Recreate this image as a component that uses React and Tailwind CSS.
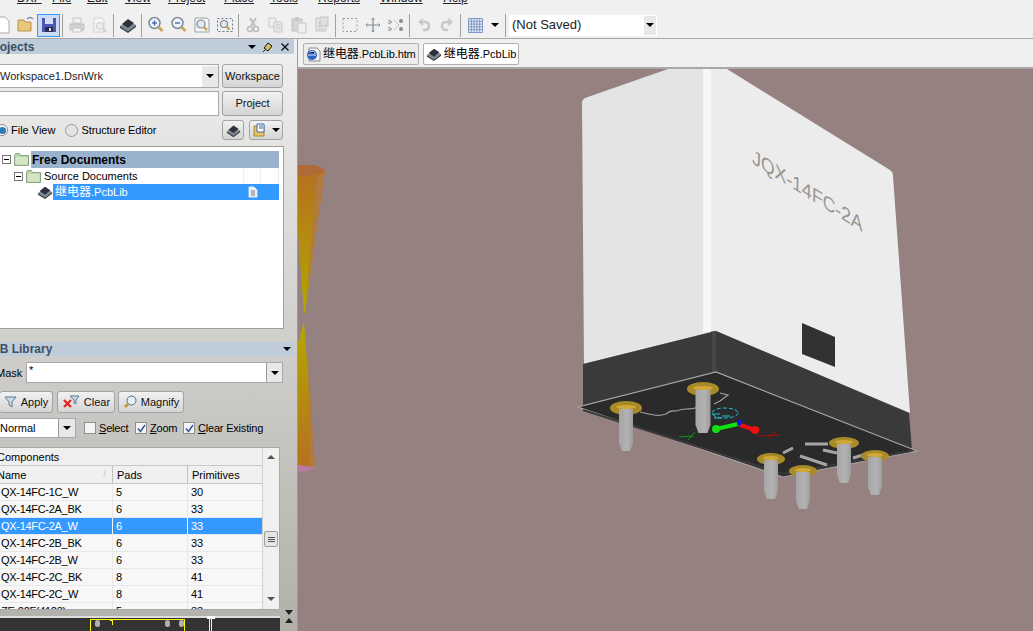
import React from "react";

const rows = [
  ["QX-14FC-1C_W", "5", "30"],
  ["QX-14FC-2A_BK", "6", "33"],
  ["QX-14FC-2A_W", "6", "33", true],
  ["QX-14FC-2B_BK", "6", "33"],
  ["QX-14FC-2B_W", "6", "33"],
  ["QX-14FC-2C_BK", "8", "41"],
  ["QX-14FC-2C_W", "8", "41"],
  ["ZE-22F(4123)", "5", "33"],
];

const pins = [
  [626, 408, 16, 7, 7, 451],
  [703, 389, 16, 7, 7.5, 433],
  [771, 459, 14, 6, 7, 499],
  [803, 471, 14, 6, 7, 509],
  [844, 443, 15, 6, 7, 483],
  [875, 456, 14, 6, 7, 495],
];

function Icon({ children }) {
  return (
    <svg width="18" height="18" viewBox="0 0 18 18" fill="none">
      {children}
    </svg>
  );
}

function Magnifier({ sign }) {
  return (
    <Icon>
      <circle cx="7.5" cy="7" r="5.5" fill="#eef3f8" stroke="#7d8a96" strokeWidth="1.5" />
      <path d="M11.5 11l4 4" stroke="#c8a85c" strokeWidth="3" />
      {sign && <path d="M5 7h5" stroke="#3d6fa8" strokeWidth="1.4" />}
      {sign === "+" && <path d="M7.5 4.5v5" stroke="#3d6fa8" strokeWidth="1.4" />}
    </Icon>
  );
}

function ChipIcon({ size = 18 }) {
  return (
    <svg width={size} height={size} viewBox="0 0 18 18">
      <path d="M1 10l8-5 8 4-8 6z" fill="#7d8894" />
      <path d="M3 8l6-5 6 4-6 5z" fill="#2b323b" />
      <path d="M1 10l8 5v2l-8-5zM17 9l-8 6v2l8-6z" fill="#444" />
    </svg>
  );
}

function DocLines() {
  return (
    <>
      <path d="M3 2h7l3 3v10H3z" fill="#e6e6e6" stroke="#c4c4c4" />
      <path d="M5 7h6M5 10h6M5 13h6" stroke="#c4c4c4" />
    </>
  );
}

function Tool({ children, active }) {
  return (
    <div className={`w-[23px] h-[23px] shrink-0 flex items-center justify-center ${active ? "border border-[#3399ff] bg-[#c7dcf2]" : ""}`}>
      {children}
    </div>
  );
}

function Sep() {
  return (
    <div className="w-[5px] h-[23px] shrink-0 flex justify-center">
      <div className="w-px h-full bg-[#a0a0a0]" />
    </div>
  );
}

function Arrow({ className = "border-t-black" }) {
  return <div className={`w-0 h-0 border-x-[4px] border-x-transparent border-t-[4px] ${className}`} />;
}

function Btn({ className = "", children }) {
  return (
    <div className={`flex items-center justify-center gap-1 shrink-0 rounded-[3px] border border-[#a3a3a3] bg-linear-to-b from-[#f2f2f2] to-[#d4d4d4] text-[#111] ${className}`}>
      {children}
    </div>
  );
}

function ComboArrow({ className = "" }) {
  return (
    <div className={`flex items-center justify-center bg-[#e8e8e8] shrink-0 ${className}`}>
      <Arrow />
    </div>
  );
}

function Check({ on, under, rest, className = "" }) {
  return (
    <div className={`flex items-center gap-[3px] shrink-0 ${className}`}>
      <div className="w-[12px] h-[12px] border border-[#8f8f8f] bg-[#f4f4f4] flex items-center justify-center">
        {on && (
          <svg width="9" height="9" viewBox="0 0 9 9">
            <path d="M1 4.5l2.5 3L8 1" fill="none" stroke="#3a5a9a" strokeWidth="1.5" />
          </svg>
        )}
      </div>
      <span className="tracking-[-0.2px]">
        <span className="underline">{under}</span>
        {rest}
      </span>
    </div>
  );
}

function Expander() {
  return (
    <div className="w-[9px] h-[9px] border border-[#777] bg-white flex items-center justify-center shrink-0">
      <div className="w-[5px] h-px bg-black" />
    </div>
  );
}

function Folder() {
  return (
    <svg width="15" height="13" viewBox="0 0 15 13" className="shrink-0">
      <path d="M0.5 2.5l1-2h4l1 2h8v10h-14z" fill="#b9d8a8" stroke="#8aa583" />
      <path d="M1.5 4h12v7.5h-12z" fill="#d5e6c6" />
    </svg>
  );
}

function LibName() {
  return (
    <span>
      <span className="text-[12px]">继电器</span>.PcbLib
    </span>
  );
}

function Relay() {
  return (
    <svg className="absolute inset-0" width="735" height="562" viewBox="298 69 735 562">
      <defs>
        <linearGradient id="cone1" x1="0" y1="0" x2="0" y2="1">
          <stop offset="0" stopColor="#b5701f" />
          <stop offset="1" stopColor="#b3a800" />
        </linearGradient>
        <linearGradient id="cone2" x1="0" y1="1" x2="0" y2="0">
          <stop offset="0" stopColor="#b5701f" />
          <stop offset="1" stopColor="#b3a800" />
        </linearGradient>
        <linearGradient id="pin" x1="0" y1="0" x2="1" y2="0">
          <stop offset="0" stopColor="#a6a6a6" />
          <stop offset="0.6" stopColor="#b2b2b2" />
          <stop offset="1" stopColor="#9c9c9c" />
        </linearGradient>
      </defs>

      {/* cone off to the left of the model */}
      <path d="M298 170H325L305 313H304L298 233Z" fill="url(#cone1)" />
      <path d="M317 176L325 172L306 300Z" fill="#b07a40" />
      <path d="M298 165h16q10 2 11 6q-7 5-27 6z" fill="#b06a38" />
      <path d="M304 322L298 343V470L315 466Z" fill="url(#cone2)" />
      <path d="M308 360L315 466L310 467Z" fill="#b07a40" />
      <path d="M298 465l10 1q6 1 7 2q-3 3-17 4z" fill="#b97aa0" />

      {/* body */}
      <path d="M582 102Q582 100 585 98L668 69H711V332L584 364Z" fill="#e4e4e4" />
      <path d="M711 69H727L890 170Q893 172 893 176L910 413L716 331H711Z" fill="#ececec" />
      <rect x="703" y="69" width="8" height="263" fill="#f7f7f7" />
      <path d="M802 323L835 337V367L802 354Z" fill="#323232" />
      <text
        transform="matrix(0.88,0.55,-0.03,1,752,163)"
        fontFamily="'Liberation Sans',sans-serif"
        fontSize="20"
        fill="#9a9590"
      >
        JQX-14FC-2A
      </text>

      {/* dark lower shell */}
      <path d="M583 364L716 331L909 413L912 450L716 372L583 405Z" fill="#3a3a3a" />
      <path d="M712 332h4v40h-4z" fill="#474747" />

      {/* board */}
      <path d="M578 407L716 372L917 451L783 477Z" fill="#2a2a2a" stroke="#a8a4a2" strokeWidth="1.2" />
      <path d="M583 410L783 474L911 451" fill="none" stroke="#3a3a3a" strokeWidth="2" />

      {/* silkscreen */}
      <path d="M640 412q8 2 14 3t12-1q4-4 10-3q6-2 10-2q8 0 12-2M720 393l8 2-8 6-6 3" fill="none" stroke="#9f9f9f" strokeWidth="1.2" />
      <path d="M783 453l10-5M805 444h23M800 456l27 9M823 450l14 3M853 458l10-3" fill="none" stroke="#a5a5a5" strokeWidth="3" />
      <ellipse cx="725" cy="413" rx="13" ry="5" fill="none" stroke="#23c5d8" strokeDasharray="4 2" />
      <path d="M712 414h8M714 418h8M722 416h8" stroke="#23c5d8" />
      <path d="M679 437l14-1M688 440l7-8" stroke="#0e9c0e" />
      <path d="M758 436l22-1M767 439l8-7" stroke="#a01010" />

      {/* origin axes */}
      <path d="M738 424L716 429" stroke="#12e012" strokeWidth="4" />
      <ellipse cx="716" cy="429" rx="4" ry="4" fill="#12e012" />
      <path d="M740 425L755 430" stroke="#ee1010" strokeWidth="4" />
      <ellipse cx="755" cy="430" rx="4.5" ry="4" fill="#ee1010" />
      <rect x="737" y="420" width="4" height="5" fill="#1010ee" />

      {/* pins */}
      {pins.map(([cx, cy, rx, ry, w, end]) => (
        <g key={cx}>
          <ellipse cx={cx} cy={cy} rx={rx} ry={ry} fill="#a98a28" />
          <ellipse cx={cx} cy={cy - 1} rx={rx - 6} ry={2} fill="#cfa838" />
          <path d={`M${cx - w} ${cy + 1}H${cx + w}V${end - 8}L${cx + w - 3} ${end}H${cx - w + 3}L${cx - w} ${end - 8}Z`} fill="url(#pin)" />
        </g>
      ))}
    </svg>
  );
}

export default function App() {
  return (
    <div className="w-[1033px] h-[631px] overflow-hidden flex flex-col bg-[#f0f0f0] text-[11px] text-black font-['Liberation_Sans','Noto_Sans_CJK_SC',sans-serif]">
      {/* menu, cut off by the top of the picture */}
      <div className="h-[12px] shrink-0 overflow-hidden">
        <div className="flex -mt-[10px] pl-[17px] text-[12px] leading-[16px] text-[#222]">
          <span className="w-[35px] shrink-0"><span className="underline">DXP</span></span>
          <span className="w-[35px] shrink-0"><span className="underline">File</span></span>
          <span className="w-[38px] shrink-0"><span className="underline">Edit</span></span>
          <span className="w-[43px] shrink-0"><span className="underline">View</span></span>
          <span className="w-[56px] shrink-0"><span className="underline">Project</span></span>
          <span className="w-[46px] shrink-0"><span className="underline">Place</span></span>
          <span className="w-[48px] shrink-0"><span className="underline">Tools</span></span>
          <span className="w-[62px] shrink-0"><span className="underline">Reports</span></span>
          <span className="w-[63px] shrink-0"><span className="underline">Window</span></span>
          <span className="shrink-0"><span className="underline">Help</span></span>
        </div>
      </div>

      {/* toolbar */}
      <div className="h-[27px] shrink-0 flex items-center -ml-[9px] border-b border-[#a8a8a8] w-[1042px]">
        <Tool><Icon><path d="M3 1h8l4 4v12H3z" fill="#fff" stroke="#aaa" /></Icon></Tool>
        <Tool>
          <Icon>
            <path d="M1 4h6l1 2h6v9H1z" fill="#e8c878" stroke="#b0924e" />
            <path d="M10 3q3-3 6 0" stroke="#7a8fb0" strokeWidth="1.5" />
          </Icon>
        </Tool>
        <Tool active>
          <Icon>
            <rect x="2" y="2" width="14" height="14" fill="#4d55b5" />
            <rect x="5" y="2" width="8" height="6" fill="#d8dcf5" />
            <rect x="5" y="11" width="8" height="5" fill="#2c2c4c" />
            <rect x="9" y="12" width="2" height="3" fill="#ddd" />
          </Icon>
        </Tool>
        <Sep />
        <Tool>
          <Icon>
            <path d="M5 2h8v5H5z" fill="#f0f0f0" stroke="#c4c4c4" />
            <path d="M2 8h14v6H2z" fill="#d2d2d2" stroke="#c0c0c0" />
            <path d="M5 12h8v4H5z" fill="#f4f4f4" stroke="#c4c4c4" />
          </Icon>
        </Tool>
        <Tool>
          <Icon>
            <path d="M3 2h8l2 2v12H3z" fill="#f6f6f6" stroke="#d0d0d0" />
            <circle cx="9" cy="10" r="3.5" fill="#eee" stroke="#c8c8c8" />
            <path d="M12 13l3 3" stroke="#d8d0b8" strokeWidth="2" />
          </Icon>
        </Tool>
        <Sep />
        <Tool><ChipIcon /></Tool>
        <Sep />
        <Tool><Magnifier sign="+" /></Tool>
        <Tool><Magnifier sign="-" /></Tool>
        <Tool>
          <Icon>
            <path d="M2 2h12l2 2v12H2z" fill="#f4f4f4" stroke="#9aa3ad" />
            <circle cx="8" cy="8" r="4" fill="#dfe9f2" stroke="#7d8a96" strokeWidth="1.2" />
            <path d="M11 11l3 3" stroke="#c8a85c" strokeWidth="2.5" />
          </Icon>
        </Tool>
        <Tool>
          <Icon>
            <rect x="1.5" y="2.5" width="15" height="13" stroke="#6a7480" strokeDasharray="2 2" />
            <circle cx="8" cy="8" r="3.5" fill="#dfe9f2" stroke="#7d8a96" strokeWidth="1.2" />
            <path d="M10.5 10.5l3 3" stroke="#c8a85c" strokeWidth="2.5" />
          </Icon>
        </Tool>
        <Sep />
        <Tool>
          <Icon>
            <path d="M6 2l5 8M12 2l-5 8" stroke="#bcbcbc" strokeWidth="2" />
            <circle cx="6" cy="13" r="2.5" stroke="#bcbcbc" strokeWidth="1.5" />
            <circle cx="12" cy="13" r="2.5" stroke="#bcbcbc" strokeWidth="1.5" />
          </Icon>
        </Tool>
        <Tool>
          <Icon>
            <path d="M2 2h7v9H2z" fill="#efefef" stroke="#c8c8c8" />
            <path d="M7 6h8v10H7z" fill="#e6e6e6" stroke="#c8c8c8" />
            <path d="M9 9h4M9 12h4" stroke="#c8c8c8" />
          </Icon>
        </Tool>
        <Tool>
          <Icon>
            <path d="M2 3h10v12H2z" fill="#d6d6d6" stroke="#c0c0c0" />
            <path d="M5 1h4v4H5z" fill="#c8c8c8" />
            <path d="M8 7h8v10H8z" fill="#efefef" stroke="#c8c8c8" />
          </Icon>
        </Tool>
        <Tool><Icon><DocLines /><path d="M7 1h8v9H7z" fill="#dedede" stroke="#c4c4c4" /></Icon></Tool>
        <Sep />
        <Tool><Icon><rect x="2" y="2.5" width="14" height="13" stroke="#9a9a9a" strokeDasharray="2 2" /></Icon></Tool>
        <Tool>
          <Icon>
            <path d="M9 2v14M2 9h14" stroke="#7e8c9c" strokeWidth="1.2" />
            <path d="M7.5 3.5L9 2l1.5 1.5M7.5 14.5L9 16l1.5-1.5M3.5 7.5L2 9l1.5 1.5M14.5 7.5L16 9l-1.5 1.5" stroke="#7e8c9c" />
          </Icon>
        </Tool>
        <Tool>
          <Icon>
            <path d="M2 4l3 2-3 2zM2 11l3 2-3 2z" stroke="#9a9a9a" />
            <path d="M7 4l5 5-5 5" stroke="#a8a8a8" strokeDasharray="2 1" />
            <circle cx="14" cy="5" r="2" fill="#8c8c8c" />
            <circle cx="14" cy="13" r="2" fill="#8c8c8c" />
          </Icon>
        </Tool>
        <Sep />
        <Tool><Icon><path d="M5 6h5q4 0 4 4t-4 4H8" stroke="#c8c8c8" strokeWidth="2.5" /><path d="M8 3L4.5 6 8 9" stroke="#c8c8c8" strokeWidth="2" /></Icon></Tool>
        <Tool><Icon><path d="M13 6H8q-4 0-4 4t4 4h2" stroke="#c8c8c8" strokeWidth="2.5" /><path d="M10 3l3.5 3L10 9" stroke="#c8c8c8" strokeWidth="2" /></Icon></Tool>
        <Sep />
        <div className="w-[23px] h-[23px] ml-px shrink-0 flex items-center justify-center">
          <svg width="15" height="15" viewBox="0 0 15 15" fill="none">
            <path d="M.5.5h14v14H.5zM.5 3.3h14M.5 6.1h14M.5 8.9h14M.5 11.7h14M3.3.5v14M6.1.5v14M8.9.5v14M11.7.5v14" stroke="#7e97cc" />
          </svg>
        </div>
        <div className="w-[16px] flex justify-center"><Arrow /></div>
        <div className="w-[5px] h-[23px] flex justify-center"><div className="w-px h-full bg-[#a0a0a0]" /></div>
        <div className="w-[148px] h-[21px] ml-[1px] bg-white flex items-center justify-between text-[13px] text-[#222] pl-[3px]">
          <span>(Not Saved)</span>
          <ComboArrow className="w-[12px] h-[19px] mr-px" />
        </div>
      </div>

      <div className="flex flex-1 min-h-0">
        {/* left panels */}
        <div className="w-[298px] shrink-0 flex flex-col overflow-hidden bg-linear-to-b from-[#f0f0f0] to-[#b2b0aa] border-r border-[#9a9a9a]">
          <div className="h-[15px] w-[294px] shrink-0 bg-[#bfcddb] flex items-center">
            <span className="-ml-[13px] font-bold text-[12px] text-[#3c4f66]">Projects</span>
            <div className="ml-auto flex items-center gap-[6px] pr-[4px]">
              <Arrow className="border-t-black" />
              <svg width="12" height="12" viewBox="0 0 12 12">
                <path d="M2 7l4-5 4 3-4 5z" fill="#d8c060" stroke="#111" />
                <path d="M3 9l-2 2" stroke="#111" />
              </svg>
              <svg width="10" height="10" viewBox="0 0 10 10">
                <path d="M1.5 1.5l7 7M8.5 1.5l-7 7" stroke="#111" strokeWidth="1.4" />
              </svg>
            </div>
          </div>

          <div className="mt-[10px] flex w-[283px] gap-[3px] h-[24px] shrink-0">
            <div className="w-[219px] bg-white border border-[#a8a8a8] border-l-0 flex items-center justify-between text-[#222]">
              <span className="truncate">Workspace1.DsnWrk</span>
              <ComboArrow className="w-[16px] h-[21px]" />
            </div>
            <Btn className="w-[61px]">Workspace</Btn>
          </div>

          <div className="mt-[3px] flex w-[283px] gap-[3px] h-[25px] shrink-0">
            <div className="w-[219px] bg-white border border-[#a8a8a8] border-l-0" />
            <Btn className="w-[61px]">Project</Btn>
          </div>

          <div className="mt-[4px] flex items-center w-[283px] h-[20px] shrink-0">
            <div className="w-[12px] h-[12px] -ml-[4px] rounded-full border border-[#888] bg-white flex items-center justify-center">
              <div className="w-[7px] h-[7px] rounded-full bg-[#2a7ab8]" />
            </div>
            <span className="ml-[3px]">File View</span>
            <div className="w-[13px] h-[13px] ml-[10px] rounded-full border border-[#999] bg-[#e4e4e4]" />
            <span className="ml-[3px] tracking-[-0.1px]">Structure Editor</span>
            <Btn className="w-[22px] h-[20px] ml-auto"><ChipIcon size={15} /></Btn>
            <Btn className="w-[34px] h-[20px] ml-[5px]">
              <svg width="15" height="14" viewBox="0 0 15 14">
                <path d="M1 3h10v10H1z" fill="#e9c35e" stroke="#a58a3c" />
                <path d="M4 1h7v8H4z" fill="#fff" stroke="#3a67b0" />
                <path d="M6 3h4M6 5h4" stroke="#3a67b0" />
              </svg>
              <Arrow />
            </Btn>
          </div>

          <div className="mt-[6px] w-[284px] h-[183px] shrink-0 bg-white border border-[#a0a0a0] border-l-0 pt-[4px] pr-[4px]">
            <div className="flex items-center h-[17px] pl-[2px]">
              <Expander />
              <div className="ml-[3px]"><Folder /></div>
              <div className="ml-[2px] flex-1 h-full bg-[#99b3cf] flex items-center pl-[1px] font-bold text-[12px]">Free Documents</div>
            </div>
            <div className="flex items-center h-[16px] pl-[14px]">
              <Expander />
              <div className="ml-[3px]"><Folder /></div>
              <span className="ml-[3px]">Source Documents</span>
              <div className="ml-auto flex h-full">
                <div className="w-[18px] border-x border-[#eeeeee]" />
                <div className="w-[18px] border-r border-[#eeeeee]" />
              </div>
            </div>
            <div className="flex items-center h-[16px] pl-[37px]">
              <ChipIcon size={16} />
              <div className="flex-1 h-full bg-[#3399ff] text-white flex items-center pl-[2px]">
                <LibName />
                <svg width="10" height="12" viewBox="0 0 10 12" className="ml-auto mr-[21px]">
                  <path d="M1 1h5l3 3v7H1z" fill="#f0f0f0" stroke="#dfe9f5" />
                  <path d="M3 5h4M3 7h4M3 9h4" stroke="#777" />
                </svg>
              </div>
            </div>
          </div>

          <div className="mt-[13px] h-[14px] w-[294px] shrink-0 bg-[#bfcddb] flex items-center justify-between pr-[3px]">
            <span className="-ml-[17px] font-bold text-[12px] text-[#3c4f66]">PCB Library</span>
            <Arrow className="border-t-black" />
          </div>

          <div className="mt-[6px] flex items-center w-[283px] h-[21px] shrink-0">
            <span className="-ml-[4px] w-[30px] shrink-0 pt-[2px]">Mask</span>
            <div className="flex-1 h-full bg-white border border-[#a8a8a8] flex items-center justify-between pl-[2px]">
              <span className="self-start leading-[14px]">*</span>
              <ComboArrow className="w-[16px] h-[19px] border-l border-[#999]" />
            </div>
          </div>

          <div className="mt-[8px] flex h-[22px] shrink-0">
            <Btn className="w-[53px] border-l-0">
              <svg width="13" height="12" viewBox="0 0 13 12">
                <path d="M1 1h11L8 6v5l-3-2V6z" fill="#c7dbe9" stroke="#5e7b92" />
              </svg>
              Apply
            </Btn>
            <Btn className="w-[58px] ml-[4px]">
              <svg width="18" height="14" viewBox="0 0 18 14">
                <path d="M8 1h9l-3 4v4l-2-1V5z" fill="#c7dbe9" stroke="#5e7b92" />
                <path d="M2 5l7 7M9 5l-7 7" stroke="#e0261c" strokeWidth="2.2" />
              </svg>
              Clear
            </Btn>
            <Btn className="w-[66px] ml-[3px]">
              <svg width="14" height="14" viewBox="0 0 14 14">
                <circle cx="8.5" cy="5.5" r="4.5" fill="#e6eff8" stroke="#5a6a78" />
                <path d="M5 9l-3 3" stroke="#c29b3c" strokeWidth="3" />
              </svg>
              Magnify
            </Btn>
          </div>

          <div className="mt-[5px] flex items-center h-[20px] shrink-0">
            <div className="w-[76px] h-full bg-white border border-[#a8a8a8] border-l-0 flex items-center justify-between">
              <span>Normal</span>
              <ComboArrow className="w-[17px] h-[18px] border-l border-[#999]" />
            </div>
            <Check className="ml-[8px] w-[51px]" under="S" rest="elect" />
            <Check className="w-[48px]" on under="Z" rest="oom" />
            <Check on under="C" rest="lear Existing" />
          </div>

          <div className="mt-[9px] w-[280px] h-[163px] shrink-0 bg-[#f7f7f7] border border-[#a8a8a8] border-l-0 flex overflow-hidden">
            <div className="flex-1 min-w-0 flex flex-col">
              <div className="h-[18px] shrink-0 bg-[#f0f0f0] border-b border-[#c8c8c8] flex items-center pt-px">
                <span className="-ml-[3px]">Components</span>
              </div>
              <div className="h-[18px] shrink-0 bg-[#f0f0f0] border-b border-[#c8c8c8] flex items-center">
                <div className="w-[113px] border-r border-[#c0c0c0] h-full flex items-center justify-between pr-[6px] pt-px">
                  <span className="-ml-[3px]">Name</span>
                  <span className="text-[9px] text-[#bbb]">/</span>
                </div>
                <div className="w-[75px] border-r border-[#c0c0c0] h-full flex items-center pl-[4px] pt-px">Pads</div>
                <div className="pl-[4px] pt-px">Primitives</div>
              </div>
              {rows.map(([name, pads, prims, sel]) => (
                <div key={name} className={`h-[17px] shrink-0 flex items-center border-b border-[#e8e8e8] ${sel ? "bg-[#3399ff] text-white" : ""}`}>
                  <div className={`w-[113px] h-full flex items-center pl-[1px] tracking-[-0.3px] border-r ${sel ? "border-[#f7f7f7]" : "border-[#e8e8e8]"}`}>{name}</div>
                  <div className={`w-[75px] h-full flex items-center pl-[3px] border-r ${sel ? "border-[#f7f7f7]" : "border-[#e8e8e8]"}`}>{pads}</div>
                  <div className="pl-[3px]">{prims}</div>
                </div>
              ))}
            </div>
            <div className="w-[17px] shrink-0 bg-[#f0f0f0] border-l border-[#d0d0d0] flex flex-col items-center">
              <div className="mt-[7px] w-0 h-0 border-x-[4px] border-x-transparent border-b-[4px] border-b-[#555]" />
              <div className="mt-[72px] w-[14px] h-[16px] rounded-[2px] border border-[#a0a0a0] bg-[#e4e4e4] flex flex-col items-center justify-center gap-px">
                <div className="w-[7px] h-px bg-[#555]" />
                <div className="w-[7px] h-px bg-[#555]" />
                <div className="w-[7px] h-px bg-[#555]" />
              </div>
              <div className="mt-auto mb-[8px] w-0 h-0 border-x-[4px] border-x-transparent border-t-[4px] border-t-[#555]" />
            </div>
          </div>

          {/* navigator */}
          <div className="mt-[6px] flex flex-1 min-h-0">
            <div className="w-[280px] bg-[#333] border-t-2 border-[#dedede] relative">
              <div className="ml-[90px] mt-px w-[95px] h-[20px] border border-[#ffff00] flex gap-[10px] pl-[4px]">
                <div className="w-[7px] h-[7px] rounded-full bg-[#b0b0b0]" />
                <div className="w-[5px] h-[5px] border-t border-r border-[#ffff00]" />
                <div className="ml-[42px] w-[7px] h-[7px] rounded-full bg-[#b0b0b0]" />
                <div className="-ml-[1px] w-[7px] h-[7px] rounded-full bg-[#b0b0b0]" />
              </div>
              <div className="absolute left-[207px] -top-[2px] w-[8px] h-[3px] bg-white" />
              <div className="absolute left-[209px] top-0 w-[3px] h-[14px] border-x border-[#eee]" />
            </div>
            <div className="w-[17px] flex justify-center -mt-[6px]">
              <svg width="10" height="14" viewBox="0 0 10 14">
                <path d="M1 0h8L5 5zM1 13h8L5 8z" fill="#222" />
              </svg>
            </div>
          </div>
        </div>

        {/* document area */}
        <div className="flex-1 min-w-0 flex flex-col">
          <div className="h-[30px] shrink-0 flex items-center gap-[4px] pl-[5px] pt-[2px] border-b-2 border-[#a8a8a8]">
            <div className="h-[22px] rounded-[2px] border border-[#b0b0b0] bg-[#ececec] flex items-center gap-[2px] pl-[2px] pr-[2px]">
              <svg width="15" height="15" viewBox="0 0 15 15">
                <path d="M3 1h8l3 3v10H3z" fill="#f4f4f4" stroke="#888" />
                <circle cx="6" cy="8" r="5" fill="#2a62c8" />
                <path d="M2 8h8M4 5q4-2 5 2" stroke="#dfe9f8" />
              </svg>
              <span className="tracking-[-0.1px]"><span className="text-[12px]">继电器</span>.PcbLib.htm</span>
            </div>
            <div className="h-[22px] rounded-[2px] border border-[#b0b0b0] bg-white flex items-center gap-[2px] pl-[2px] pr-[2px]">
              <ChipIcon size={16} />
              <LibName />
            </div>
          </div>
          <div className="flex-1 relative bg-[#968181] overflow-hidden">
            <Relay />
          </div>
        </div>
      </div>
    </div>
  );
}
